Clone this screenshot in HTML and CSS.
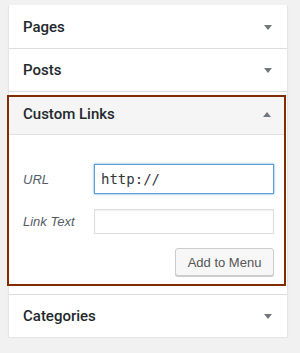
FILE: index.html
```html
<!DOCTYPE html>
<html lang="en">
<head>
    <meta charset="UTF-8">
    <meta name="viewport" content="width=device-width, initial-scale=1.0">
    <title>Menu Items</title>
    <link rel="stylesheet" href="styles.css">
</head>
<body>
    <div class="menu-panels">
        <div class="panel">
            <h3 class="panel-title">Pages
                <svg class="arrow" width="8" height="5" viewBox="0 0 8 5"><path d="M0 0h8L4 5z"/></svg>
            </h3>
        </div>
        <div class="panel">
            <h3 class="panel-title">Posts
                <svg class="arrow" width="8" height="5" viewBox="0 0 8 5"><path d="M0 0h8L4 5z"/></svg>
            </h3>
        </div>
        <div class="panel open">
            <h3 class="panel-title">Custom Links
                <svg class="arrow" width="8" height="5" viewBox="0 0 8 5"><path d="M0 5h8L4 0z"/></svg>
            </h3>
            <div class="panel-body">
                <div class="field">
                    <label for="url">URL</label>
                    <input type="text" id="url" class="url-input" value="http://">
                </div>
                <div class="field">
                    <label for="link-text">Link Text</label>
                    <input type="text" id="link-text" class="text-input">
                </div>
                <div class="actions">
                    <button type="button">Add to Menu</button>
                </div>
            </div>
        </div>
        <div class="panel">
            <h3 class="panel-title">Categories
                <svg class="arrow" width="8" height="5" viewBox="0 0 8 5"><path d="M0 0h8L4 5z"/></svg>
            </h3>
        </div>
    </div>
</body>
</html>
```

FILE: styles.css
```css
body {
    margin: 0;
    background-color: #f1f1f1;
    font-family: "Liberation Sans", Arial, sans-serif;
    color: #23282d;
}

.menu-panels {
    box-sizing: border-box;
    width: 280px;
    margin: 5px 0 0 8px;
    padding-top: 1px;
    background: #fff;
    border: 1px solid #e5e5e5;
    border-top: none;
    box-shadow: 0 1px 1px rgba(0,0,0,0.06);
}

.panel-title {
    box-sizing: border-box;
    height: 43px;
    margin: 0;
    padding: 0 15px 0 14px;
    display: flex;
    align-items: center;
    justify-content: space-between;
    font-family: Roboto, "Liberation Sans", sans-serif;
    font-size: 15px;
    font-weight: 500;
    border-bottom: 1px solid #ddd;
}

.panel:last-child .panel-title {
    height: 42px;
    border-bottom: none;
}

.arrow {
    fill: #72777c;
}

.panel.open {
    margin: 3px 1px 8px -2px;
    border: 2px solid #832c00;
}

.panel.open + .panel {
    border-top: 1px solid #ddd;
}

.panel.open .panel-title {
    height: 38px;
    padding: 0 13px 3px 14px;
    background: #f5f5f5;
    border-bottom: 1px solid #e1e1e1;
}

.panel-body {
    padding: 29px 10px 8px 14px;
}

.field {
    display: flex;
    align-items: center;
    margin-bottom: 15px;
}

.field label {
    flex-shrink: 0;
    width: 71px;
    font-size: 13px;
    font-style: italic;
    color: #555d66;
}

.url-input {
    box-sizing: border-box;
    width: 180px;
    height: 30px;
    padding: 0 6px;
    font-family: "DejaVu Sans Mono", monospace;
    font-size: 14px;
    color: #32373c;
    border: 1px solid #5b9dd9;
    box-shadow: 0 0 2px rgba(30,140,190,0.8);
    outline: none;
}

.text-input {
    box-sizing: border-box;
    width: 180px;
    height: 25px;
    border: 1px solid #ddd;
    box-shadow: inset 0 1px 2px rgba(0,0,0,0.07);
}

.actions {
    display: flex;
    justify-content: flex-end;
    margin-top: -1px;
}

button {
    box-sizing: border-box;
    width: 99px;
    height: 28px;
    padding: 0;
    font-family: "Liberation Sans", Arial, sans-serif;
    font-size: 13px;
    color: #555;
    background: #f7f7f7;
    border: 1px solid #ccc;
    border-radius: 3px;
    box-shadow: 0 1px 0 #ccc;
    cursor: pointer;
}
```
